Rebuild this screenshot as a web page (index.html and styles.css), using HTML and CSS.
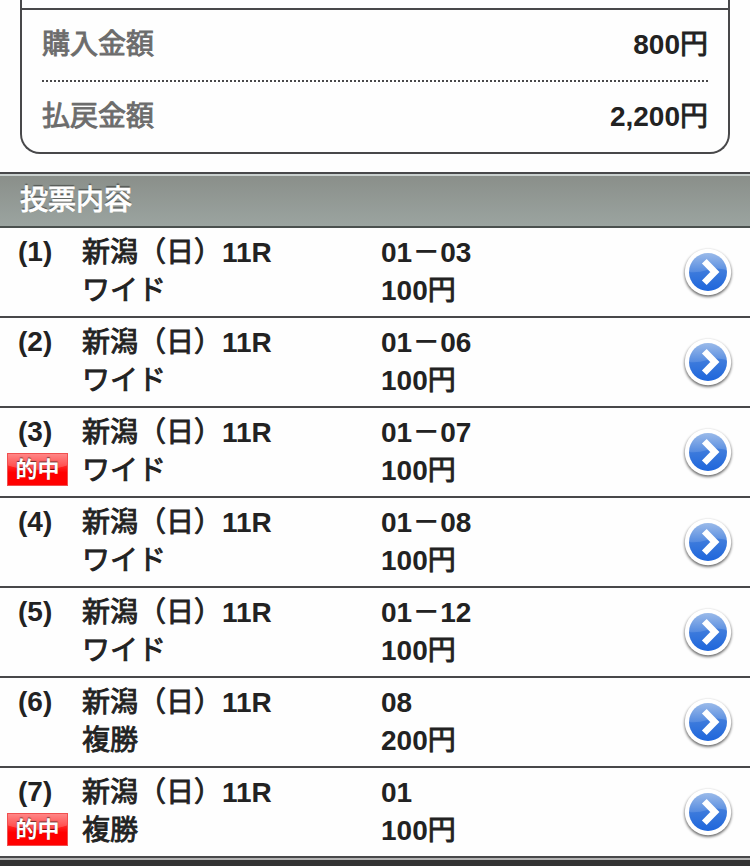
FILE: index.html
```html
<!DOCTYPE html>
<html lang="ja">
<head>
<meta charset="utf-8">
<title>投票内容</title>
<link rel="stylesheet" href="styles.css">
</head>
<body>
<svg class="defs" aria-hidden="true">
  <defs>
    <linearGradient id="ball" x1="0" y1="0" x2="0" y2="1">
      <stop offset="0" stop-color="#5a8edc"/>
      <stop offset="1" stop-color="#1e66dc"/>
    </linearGradient>
    <linearGradient id="gloss" x1="0" y1="0" x2="0" y2="1">
      <stop offset="0" stop-color="#fff" stop-opacity=".4"/>
      <stop offset="1" stop-color="#fff" stop-opacity=".12"/>
    </linearGradient>
    <filter id="soft" x="-20%" y="-20%" width="140%" height="140%"><feGaussianBlur stdDeviation="1.8"/></filter>
    <symbol id="arrow" viewBox="0 0 60 60">
      <circle cx="30" cy="31.5" r="23.3" fill="#000" opacity=".65" filter="url(#soft)"/>
      <circle cx="30" cy="30" r="23.2" fill="#fff"/>
      <circle cx="30" cy="30" r="19" fill="url(#ball)"/>
      <path d="M11 30A19 19 0 0 1 49 28Q38 25 29 28T11 30Z" fill="url(#gloss)"/>
      <path d="M26.3 19.2L36.8 30L26.3 40.8" fill="none" stroke="#fff" stroke-width="6.6"/>
    </symbol>
  </defs>
</svg>
<section class="summary">
  <dl class="amounts">
    <div class="amount"><dt class="jp">購入金額</dt><dd>800<span class="jp">円</span></dd></div>
    <div class="amount"><dt class="jp">払戻金額</dt><dd>2,200<span class="jp">円</span></dd></div>
  </dl>
</section>
<h2 class="heading jp">投票内容</h2>
<ul class="bets">
  <li class="bet"><div class="no"><span class="idx">(1)</span></div><div class="race"><span class="jp">新潟（日）</span>11R<br><span class="jp">ワイド</span></div><div class="pick">01－03<br>100<span class="jp">円</span></div><svg class="arrow"><use href="#arrow"/></svg></li>
  <li class="bet"><div class="no"><span class="idx">(2)</span></div><div class="race"><span class="jp">新潟（日）</span>11R<br><span class="jp">ワイド</span></div><div class="pick">01－06<br>100<span class="jp">円</span></div><svg class="arrow"><use href="#arrow"/></svg></li>
  <li class="bet"><div class="no"><span class="idx">(3)</span><span class="hit">的中</span></div><div class="race"><span class="jp">新潟（日）</span>11R<br><span class="jp">ワイド</span></div><div class="pick">01－07<br>100<span class="jp">円</span></div><svg class="arrow"><use href="#arrow"/></svg></li>
  <li class="bet"><div class="no"><span class="idx">(4)</span></div><div class="race"><span class="jp">新潟（日）</span>11R<br><span class="jp">ワイド</span></div><div class="pick">01－08<br>100<span class="jp">円</span></div><svg class="arrow"><use href="#arrow"/></svg></li>
  <li class="bet"><div class="no"><span class="idx">(5)</span></div><div class="race"><span class="jp">新潟（日）</span>11R<br><span class="jp">ワイド</span></div><div class="pick">01－12<br>100<span class="jp">円</span></div><svg class="arrow"><use href="#arrow"/></svg></li>
  <li class="bet"><div class="no"><span class="idx">(6)</span></div><div class="race"><span class="jp">新潟（日）</span>11R<br><span class="jp">複勝</span></div><div class="pick">08<br>200<span class="jp">円</span></div><svg class="arrow"><use href="#arrow"/></svg></li>
  <li class="bet"><div class="no"><span class="idx">(7)</span><span class="hit">的中</span></div><div class="race"><span class="jp">新潟（日）</span>11R<br><span class="jp">複勝</span></div><div class="pick">01<br>100<span class="jp">円</span></div><svg class="arrow"><use href="#arrow"/></svg></li>
</ul>
<div class="footer"></div>
</body>
</html>
```
FILE: styles.css
```css
* { box-sizing: border-box; }
html, body { height: 866px; overflow: hidden; }
body {
  margin: 0;
  background: #fefefe;
  color: #222;
  font: bold 28px/38px "Liberation Sans", "Noto Sans CJK JP", sans-serif;
}
.defs { display: block; width: 0; height: 0; }
/* Japanese text sits between regular and bold */
.jp { font-weight: 400; -webkit-text-stroke: .9px currentColor; }
.summary {
  height: 154px;
  margin: 0 20px 18px;
  padding-top: 8px;
  border: 2px solid #48484a;
  border-top: 0;
  border-radius: 0 0 20px 20px;
}
.amounts {
  margin: 0;
  padding: 0 20px;
  border-top: 2px solid #48484a;
}
.amount {
  display: flex;
  justify-content: space-between;
  height: 72px;
  padding-top: 16px;
}
.amount + .amount { border-top: 2px dotted #48484a; }
.amount:first-child { height: 70px; }
.amount dt { color: #6c6c6c; }
.amount dd { margin: 0; }
.heading {
  height: 56px;
  margin: 0;
  padding: 8px 20px 0;
  border-top: 2px solid #48484a;
  border-bottom: 2px solid #4a504e;
  background: linear-gradient(#c9d0ce 2px, #8a8f8a 2px, #9ba4a0);
  color: #fff;
  font-size: 28px;
  line-height: 38px;
  text-shadow: 0 -2px 1px rgba(0, 0, 0, .4);
}
.bets { margin: 0; padding: 0; list-style: none; }
.bet {
  display: grid;
  grid-template-columns: 82px 299px 1fr 60px;
  height: 90px;
  padding: 6px 12px 0 0;
  border-bottom: 2px solid #48484a;
  white-space: nowrap;
}
.no { display: flex; flex-direction: column; }
.idx { height: 38px; margin: -1px 0 0 18px; }
.hit {
  width: 61px;
  height: 33px;
  margin: 2px 0 0 7px;
  border: 1px solid #f05050;
  background: radial-gradient(ellipse 60px 22px at 50% 0, rgba(255, 255, 255, .2) 70%, transparent 73%), linear-gradient(#ff6868, #f00 60%);
  color: #fff;
  font-size: 22px;
  line-height: 32px;
  text-align: center;
  text-shadow: 0 -1px 1px rgba(0, 0, 0, .6);
}
.arrow { width: 60px; height: 60px; margin-top: 8px; }
.footer {
  height: 8px;
  border-top: 2px solid #b4b4b4;
  background: #333;
}
```
